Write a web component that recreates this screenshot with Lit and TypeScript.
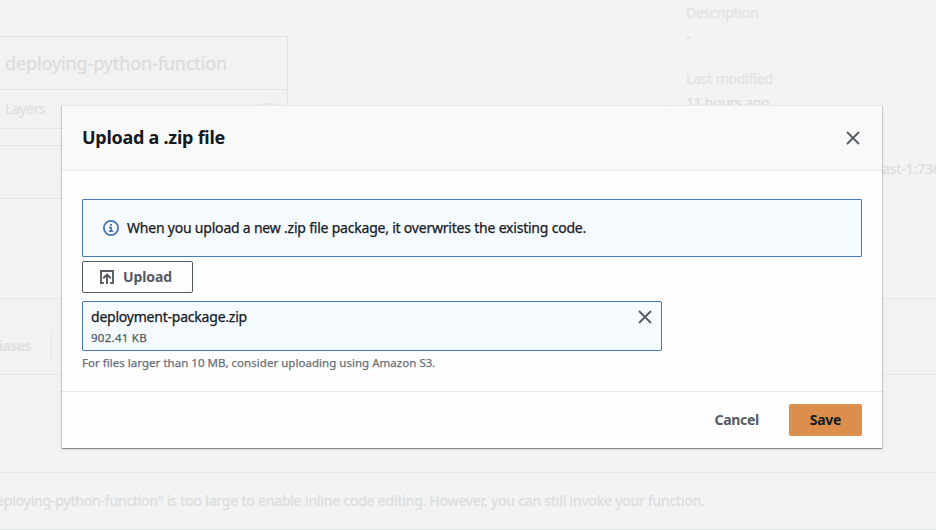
import { LitElement, html, css } from "lit";

const closeIcon = html`<svg class="x" viewBox="0 0 16 16" width="16" height="16">
  <path d="M2 2l12 12M14 2L2 14" fill="none" stroke="#545b64" stroke-width="1.8" />
</svg>`;

class PageBackdrop extends LitElement {
  static styles = css`
    :host { display: flex; flex-direction: column; height: 530px; overflow: hidden; background: #f2f2f2; color: #dfdfdf; font-size: 14px; line-height: 22px; white-space: nowrap; -webkit-text-stroke-width: 0.25px; }
    .overview { height: 298px; display: grid; grid-template-columns: 665px 1fr; border-bottom: 1px solid #e6e6e6; background: #f3f3f3; }
    .diagram { padding-top: 36px; display: flex; flex-direction: column; gap: 16px; }
    .card { box-sizing: border-box; width: 288px; border: 1px solid #e3e3e3; border-left: 0; background: #f2f2f2; }
    .fn { height: 52px; padding-left: 5px; font-size: 18px; line-height: 53px; letter-spacing: -0.11px; border-bottom: 1px solid #e3e3e3; color: #dcdcdc; }
    .layers { height: 38px; padding: 0 11px 0 5px; display: flex; justify-content: space-between; line-height: 38px; letter-spacing: -0.45px; }
    .count { line-height: 36px; }
    .trigger { height: 54px; }
    .details { border-left: 1px solid #efefef; padding: 2px 0 0 20px; display: flex; flex-direction: column; letter-spacing: -0.27px; color: #dddddd; }
    .label { color: #e3e3e3; }
    .next { letter-spacing: -0.18px; }
    .details .gap { margin-top: 2px; }
    .details .next { margin-top: 20px; }
    .arn { margin: 44px 0 0 196px; letter-spacing: -0.1px; }
    .tabs { height: 75px; display: flex; align-items: center; border-bottom: 1px solid #e6e6e6; font-weight: 700; color: #e1e1e1; -webkit-text-stroke-width: 0; }
    .tab { width: 51px; height: 30px; border-right: 1px solid #e6e6e6; margin-top: 18px; display: flex; align-items: center; }
    .tab span { margin-left: -14px; letter-spacing: -0.6px; }
    .strip { height: 16px; border-bottom: 1px solid #f0f0f0; }
    .code { height: 63px; }
    .fill { height: 17px; background: #f3f3f3; }
    .notice { height: 56px; border-top: 1px solid #e0e4e8; border-bottom: 1px solid #e0e4e4; background: #f2f4f4; line-height: 55px; letter-spacing: -0.18px; color: #dcdddd; }
    .notice span { margin-left: -17px; }
  `;
  render() {
    return html`
      <div class="overview">
        <div class="diagram">
          <div class="card">
            <div class="fn">deploying-python-function</div>
            <div class="layers"><span>Layers</span><span class="count">(0)</span></div>
          </div>
          <div class="card trigger"></div>
        </div>
        <div class="details">
          <div class="label">Description</div>
          <div class="gap">-</div>
          <div class="label next">Last modified</div>
          <div class="gap">11 hours ago</div>
          <div class="arn">ast-1:736</div>
        </div>
      </div>
      <div class="tabs"><div class="tab"><span>Aliases</span></div></div>
      <div class="strip"></div>
      <div class="code"></div>
      <div class="fill"></div>
      <div class="notice"><span>"deploying-python-function" is too large to enable inline code editing. However, you can still invoke your function.</span></div>
    `;
  }
}
customElements.define("page-backdrop", PageBackdrop);

class UploadDialog extends LitElement {
  static styles = css`
    :host { display: flex; flex-direction: column; width: 820px; background: #fefefe; border-top: 1px solid #e8e8e8; color: #16191f; font-size: 14px; line-height: 22px; white-space: nowrap;
      box-shadow: 0 1px 1px 0 rgba(0, 10, 20, 0.28), 1px 1px 1px 0 rgba(0, 10, 20, 0.13), -1px 1px 1px 0 rgba(0, 10, 20, 0.13); }
    svg { display: block; flex: none; }
    header { height: 64px; padding: 0 21px 0 20px; display: flex; align-items: center; justify-content: space-between; background: #f9f9f9; border-bottom: 1px solid #e8e8e8; }
    h2 { margin: 0; padding-bottom: 2px; font-size: 18px; font-weight: 700; letter-spacing: -0.26px; }
    .body { padding: 28px 20px 17px; display: flex; flex-direction: column; align-items: flex-start; -webkit-text-stroke-width: 0.25px; }
    .alert { box-sizing: border-box; width: 780px; height: 58px; padding-left: 20px; display: flex; align-items: center; gap: 8px; background: #f5faff; border: 1px solid #4a77b4; border-radius: 1px; letter-spacing: -0.21px; }
    button { font: inherit; font-weight: 700; box-sizing: border-box; height: 32px; padding: 0; border-radius: 2px; display: flex; align-items: center; justify-content: center; -webkit-text-stroke-width: 0; }
    .upload { margin-top: 4px; width: 111px; padding-right: 4px; gap: 8px; background: #fefefe; border: 1px solid #545b64; color: #545b64; letter-spacing: -0.1px; }
    .file { box-sizing: border-box; width: 580px; height: 50px; margin-top: 8px; padding: 4px 8px 0; display: flex; justify-content: space-between; background: #f5faff; border: 1px solid #4a77b4; border-radius: 2px; }
    .name { letter-spacing: -0.22px; }
    .size { font-size: 11.5px; line-height: 19px; letter-spacing: 0.27px; color: #545b64; }
    .file .x { margin-top: 3px; }
    .hint { margin-top: 1px; padding-bottom: 1px; font-size: 11.5px; line-height: 21px; letter-spacing: 0.03px; color: #687078; }
    footer { height: 56px; padding: 0 20px; border-top: 1px solid #e8e8e8; display: flex; align-items: center; justify-content: flex-end; gap: 30px; }
    .cancel { border: 0; background: none; color: #545b64; letter-spacing: -0.28px; }
    .save { width: 73px; border: 0; background: #dc8e4c; color: #16191f; letter-spacing: -0.25px; }
  `;
  render() {
    return html`
      <header><h2>Upload a .zip file</h2>${closeIcon}</header>
      <div class="body">
        <div class="alert">
          <svg viewBox="0 0 16 16" width="16" height="16" fill="none" stroke="#4a77b4" stroke-width="1.8">
            <circle cx="8" cy="8" r="7.1" />
            <path d="M7.1 4.8h1.9M6 7.6h2.1v3.3M5.9 11.2h4.3" stroke-width="1.7" />
          </svg>
          <span>When you upload a new .zip file package, it overwrites the existing code.</span>
        </div>
        <button class="upload">
          <svg viewBox="0 0 16 16" width="16" height="16" fill="none" stroke="#545b64" stroke-width="1.9">
            <path d="M4.8 14H2V2h12v12h-2.8M8 15V6M4.2 9.3L8 5.6l3.8 3.7" />
          </svg>
          <span>Upload</span>
        </button>
        <div class="file">
          <div><div class="name">deployment-package.zip</div><div class="size">902.41 KB</div></div>
          ${closeIcon}
        </div>
        <div class="hint">For files larger than 10 MB, consider uploading using Amazon S3.</div>
      </div>
      <footer><button class="cancel">Cancel</button><button class="save">Save</button></footer>
    `;
  }
}
customElements.define("upload-dialog", UploadDialog);

class AppRoot extends LitElement {
  static styles = css`
    :host { display: block; position: relative; width: 936px; height: 530px; overflow: hidden; font-family: "Noto Sans", "Open Sans", sans-serif; }
    .modal { position: absolute; left: 62px; top: 105px; }
  `;
  render() {
    return html`<page-backdrop></page-backdrop><upload-dialog class="modal"></upload-dialog>`;
  }
}
customElements.define("app-root", AppRoot);
